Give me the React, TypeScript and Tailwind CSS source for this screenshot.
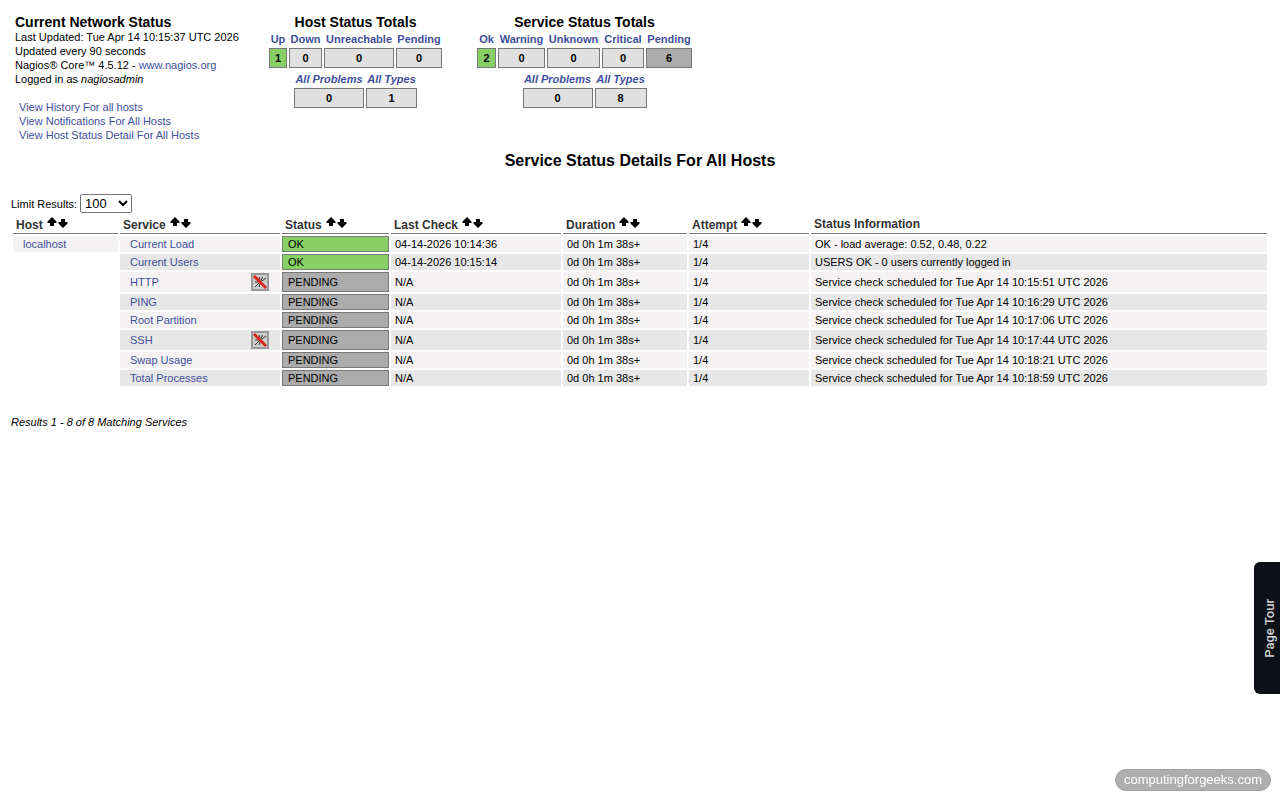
interface Total {
  label: string
  count: number
  width: string
  color?: string
}

interface TotalsProps {
  title: string
  states: Total[]
  sums: Total[]
}

interface Service {
  name: string
  status: 'OK' | 'PENDING'
  lastCheck: string
  info: string
  passiveOnly?: boolean
}

const hostStates: Total[] = [
  { label: 'Up', count: 1, width: 'w-[18px]', color: 'bg-[#88d066]' },
  { label: 'Down', count: 0, width: 'w-[33px]' },
  { label: 'Unreachable', count: 0, width: 'w-[70px]' },
  { label: 'Pending', count: 0, width: 'w-[46px]' },
]

const hostSums: Total[] = [
  { label: 'All Problems', count: 0, width: 'w-[70px]' },
  { label: 'All Types', count: 1, width: 'w-[51px]' },
]

const serviceStates: Total[] = [
  { label: 'Ok', count: 2, width: 'w-[19px]', color: 'bg-[#88d066]' },
  { label: 'Warning', count: 0, width: 'w-[47px]' },
  { label: 'Unknown', count: 0, width: 'w-[53px]' },
  { label: 'Critical', count: 0, width: 'w-[42px]' },
  { label: 'Pending', count: 6, width: 'w-[46px]', color: 'bg-[#acacac]' },
]

const serviceSums: Total[] = [
  { label: 'All Problems', count: 0, width: 'w-[70px]' },
  { label: 'All Types', count: 8, width: 'w-[52px]' },
]

const services: Service[] = [
  { name: 'Current Load', status: 'OK', lastCheck: '04-14-2026 10:14:36', info: 'OK - load average: 0.52, 0.48, 0.22' },
  { name: 'Current Users', status: 'OK', lastCheck: '04-14-2026 10:15:14', info: 'USERS OK - 0 users currently logged in' },
  { name: 'HTTP', status: 'PENDING', lastCheck: 'N/A', info: 'Service check scheduled for Tue Apr 14 10:15:51 UTC 2026', passiveOnly: true },
  { name: 'PING', status: 'PENDING', lastCheck: 'N/A', info: 'Service check scheduled for Tue Apr 14 10:16:29 UTC 2026' },
  { name: 'Root Partition', status: 'PENDING', lastCheck: 'N/A', info: 'Service check scheduled for Tue Apr 14 10:17:06 UTC 2026' },
  { name: 'SSH', status: 'PENDING', lastCheck: 'N/A', info: 'Service check scheduled for Tue Apr 14 10:17:44 UTC 2026', passiveOnly: true },
  { name: 'Swap Usage', status: 'PENDING', lastCheck: 'N/A', info: 'Service check scheduled for Tue Apr 14 10:18:21 UTC 2026' },
  { name: 'Total Processes', status: 'PENDING', lastCheck: 'N/A', info: 'Service check scheduled for Tue Apr 14 10:18:59 UTC 2026' },
]

const columns = [
  { label: 'Host', width: 'w-[105px]' },
  { label: 'Service', width: 'w-[160px]' },
  { label: 'Status', width: 'w-[107px]' },
  { label: 'Last Check', width: 'w-[170px]' },
  { label: 'Duration', width: 'w-[124px]' },
  { label: 'Attempt', width: 'w-[120px]' },
]

const TotalsTable = ({ items, italic }: { items: Total[]; italic?: boolean }) => (
  <table className="border-separate border-spacing-x-[2px] border-spacing-y-0 table-fixed text-[11px] font-bold">
    <thead>
      <tr>
        {items.map((item) => (
          <th key={item.label} className={`h-[18px] p-0 ${item.width}`}>
            <a href="#" className={`flex justify-center whitespace-nowrap text-[#414f9c] ${italic ? 'italic' : ''}`}>
              {item.label}
            </a>
          </th>
        ))}
      </tr>
    </thead>
    <tbody>
      <tr>
        {items.map((item) => (
          <td
            key={item.label}
            className={`h-5 border border-[#777] p-0 text-center ${item.color ?? 'bg-[#e0e0e0]'}`}
          >
            {item.count}
          </td>
        ))}
      </tr>
    </tbody>
  </table>
)

const StatusTotals = ({ title, states, sums }: TotalsProps) => (
  <section className="flex flex-col items-center">
    <h2 className="text-[14px] leading-4 font-bold">{title}</h2>
    <TotalsTable items={states} />
    <div className="pt-0.5">
      <TotalsTable items={sums} italic />
    </div>
  </section>
)

const SortArrows = ({ label }: { label: string }) => (
  <span className="ml-1 inline-flex gap-px align-top">
    <a href="#" aria-label={`Sort by ${label} ascending`}>
      <svg width="10" height="10" viewBox="0 0 10 10" fill="#000">
        <path d="M5 0 L9.5 4.5 V6 H7 V9 H3 V6 H0.5 V4.5 Z" />
      </svg>
    </a>
    <a href="#" aria-label={`Sort by ${label} descending`} className="pt-0.5">
      <svg width="10" height="10" viewBox="0 0 10 10" fill="#000">
        <path d="M3 0 H7 V3 H9.5 V4.5 L5 9 L0.5 4.5 V3 H3 Z" />
      </svg>
    </a>
  </span>
)

const PassiveIcon = () => (
  <svg width="18" height="18" viewBox="0 0 18 18" fill="none" className="shrink-0">
    <rect x="1" y="1" width="16" height="16" fill="#cdcdcd" stroke="#999" strokeWidth="2" />
    <path
      d="M8 4 L9 7 M11.5 4 L10 8 M15 5 L11 8 M4 9 H7 M4 14 L8 10 M8 14 L9 11"
      stroke="#333"
    />
    <path d="M3 3 L15 15" stroke="#e0261c" strokeWidth="3" />
  </svg>
)

const App = () => {
  return (
    <div className="px-[11px] pt-3.5 font-['Liberation_Sans',Arial,sans-serif] text-[11px] leading-[14px] text-black">
      <header className="flex items-start pl-1">
        <section className="w-[252px]">
          <h1 className="text-[14px] leading-4 font-bold">Current Network Status</h1>
          <p>Last Updated: Tue Apr 14 10:15:37 UTC 2026</p>
          <p>Updated every 90 seconds</p>
          <p>
            Nagios® Core™ 4.5.12 - <a href="#" className="text-[#414f9c]">www.nagios.org</a>
          </p>
          <p>
            Logged in as <i>nagiosadmin</i>
          </p>
          <nav className="mt-3.5 flex flex-col items-start pl-1 text-[#414f9c]">
            <a href="#">View History For all hosts</a>
            <a href="#">View Notifications For All Hosts</a>
            <a href="#">View Host Status Detail For All Hosts</a>
          </nav>
        </section>
        <StatusTotals title="Host Status Totals" states={hostStates} sums={hostSums} />
        <div className="w-[31px]" />
        <StatusTotals title="Service Status Totals" states={serviceStates} sums={serviceSums} />
      </header>

      <h2 className="mt-2 text-center text-[16px] leading-[22px] font-bold">Service Status Details For All Hosts</h2>

      <div className="mt-[22px] flex items-center gap-[3px]">
        <label htmlFor="limit">Limit Results:</label>
        <select
          id="limit"
          defaultValue="100"
          className="h-[19px] w-[52px] rounded-[2px] border border-[#767676] bg-white text-[13px] leading-4"
        >
          <option>50</option>
          <option>100</option>
          <option>250</option>
        </select>
      </div>

      {/* Service list */}
      <table className="w-full table-fixed border-separate border-spacing-[2px]">
        <thead>
          <tr className="text-left text-[12px] leading-4 text-[#333]">
            {columns.map(({ label, width }) => (
              <th key={label} className={`h-[19px] border-b border-[#777] p-0 pl-[3px] align-bottom whitespace-nowrap ${width}`}>
                {label}
                <SortArrows label={label} />
              </th>
            ))}
            <th className="h-[19px] border-b border-[#777] p-0 pb-px pl-[3px] align-bottom">Status Information</th>
          </tr>
        </thead>
        <tbody>
          {services.map((service, i) => {
            const bg = i % 2 === 0 ? 'bg-[#f4f2f2]' : 'bg-[#e7e7e7]'
            const statusBg = service.status === 'OK' ? 'bg-[#88d066]' : 'bg-[#acacac]'
            return (
              <tr key={service.name} className={service.passiveOnly ? 'h-5' : 'h-4'}>
                <td className={`p-0 pl-2.5 ${i === 0 ? bg : ''}`}>
                  {i === 0 && <a href="#" className="text-[#414f9c]">localhost</a>}
                </td>
                <td className={`p-0 pl-2.5 ${bg}`}>
                  <div className="flex items-center justify-between pr-[11px]">
                    <a href="#" className="text-[#414f9c]">{service.name}</a>
                    {service.passiveOnly && <PassiveIcon />}
                  </div>
                </td>
                <td className={`border border-[#777] p-0 pl-[5px] ${statusBg}`}>{service.status}</td>
                <td className={`p-0 pl-1 ${bg}`}>{service.lastCheck}</td>
                <td className={`p-0 pl-1 ${bg}`}>0d 0h 1m 38s+</td>
                <td className={`p-0 pl-1 ${bg}`}>1/4</td>
                <td className={`p-0 pl-1 ${bg}`}>{service.info}</td>
              </tr>
            )
          })}
        </tbody>
      </table>

      <p className="mt-[27px] italic">Results 1 - 8 of 8 Matching Services</p>

      <button
        type="button"
        className="fixed top-[562px] right-0 flex h-[132px] w-[26px] items-center justify-center rounded-l-md bg-[#0d1117] pl-1.5 font-[Roboto] text-[13px] font-medium text-[#d0d3d6]"
      >
        <span className="rotate-180 [writing-mode:vertical-rl]">Page Tour</span>
      </button>

      <div className="fixed right-[9px] bottom-[9px] flex h-[22px] items-center rounded-full border border-[#a0a0a0] bg-[#aeaeae] px-2 text-[13px] text-white">
        computingforgeeks.com
      </div>
    </div>
  )
}

export default App
